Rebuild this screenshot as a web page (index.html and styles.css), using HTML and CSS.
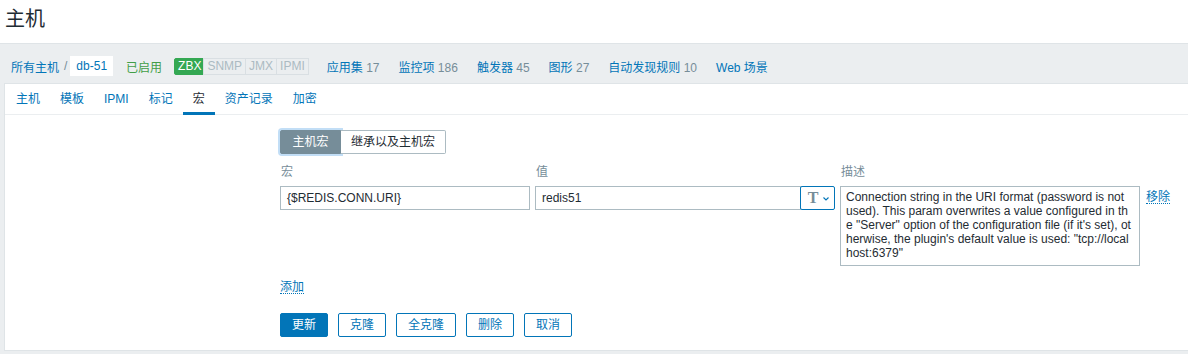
FILE: index.html
```html
<!DOCTYPE html>
<html lang="zh">
<head>
<meta charset="utf-8">
<title>主机</title>
<link rel="stylesheet" href="styles.css">
</head>
<body>
<header class="header">
  <h1 class="title">主机</h1>
</header>
<nav class="nav">
  <ul class="crumbs">
    <li><a class="link">所有主机</a></li>
    <li class="sep">/</li>
    <li class="current">db-51</li>
    <li class="enabled">已启用</li>
    <li class="status">
      <span class="st st-green">ZBX</span><span class="st st-grey">SNMP</span><span class="st st-grey">JMX</span><span class="st st-grey">IPMI</span>
    </li>
    <li class="nav-item first"><a class="link">应用集</a> <span class="cnt">17</span></li>
    <li class="nav-item"><a class="link">监控项</a> <span class="cnt">186</span></li>
    <li class="nav-item"><a class="link">触发器</a> <span class="cnt">45</span></li>
    <li class="nav-item"><a class="link">图形</a> <span class="cnt">27</span></li>
    <li class="nav-item"><a class="link">自动发现规则</a> <span class="cnt">10</span></li>
    <li class="nav-item"><a class="link">Web 场景</a></li>
  </ul>
</nav>
<main class="box">
  <ul class="tabs">
    <li class="tab">主机</li>
    <li class="tab">模板</li>
    <li class="tab">IPMI</li>
    <li class="tab">标记</li>
    <li class="tab active">宏</li>
    <li class="tab">资产记录</li>
    <li class="tab">加密</li>
  </ul>
  <div class="tab-body">
    <div class="seg-group">
      <span class="seg seg-on">主机宏</span><span class="seg">继承以及主机宏</span>
    </div>
    <div class="heads">
      <span>宏</span><span>值</span><span>描述</span>
    </div>
    <div class="macro-row">
      <div class="input macro">{$REDIS.CONN.URI}</div>
      <div class="value">
        <div class="input value-input">redis51</div>
        <div class="type-btn"><span class="t-glyph">T</span><svg class="chev" width="6" height="4" viewBox="0 0 6 4"><path d="M0.5 0.5 L3 3 L5.5 0.5" fill="none" stroke="#0275b8" stroke-width="1.1"/></svg></div>
      </div>
      <div class="desc">Connection string in the URI format (password is not<br>used). This param overwrites a value configured in th<br>e "Server" option of the configuration file (if it's set), ot<br>herwise, the plugin's default value is used: "tcp://local<br>host:6379"</div>
      <a class="dotted remove">移除</a>
    </div>
    <div class="add-row"><a class="dotted">添加</a></div>
    <div class="buttons">
      <button class="btn btn-primary">更新</button>
      <button class="btn">克隆</button>
      <button class="btn">全克隆</button>
      <button class="btn">删除</button>
      <button class="btn">取消</button>
    </div>
  </div>
</main>
</body>
</html>
```

FILE: styles.css
```css
* { box-sizing: border-box; }
html, body { margin: 0; padding: 0; }
body {
  width: 1188px;
  height: 354px;
  overflow: hidden;
  background: #ebeef0;
  color: #1f2c33;
  font-family: "Liberation Sans", Arial, "Noto Sans CJK SC", sans-serif;
  font-size: 12px;
}
ul { list-style: none; margin: 0; padding: 0; }
a { cursor: pointer; }
.link { color: #0275b8; text-decoration: none; }

.header {
  background: #fff;
  height: 43px;
  padding: 7px 0 0 5px;
}
.title {
  margin: 0;
  font-size: 20px;
  line-height: 24px;
  font-weight: normal;
  color: #1f2c33;
}

.nav {
  height: 40px;
  border-top: 1px solid #dfe4e7;
  padding: 12px 0 0 11px;
}
.crumbs {
  display: flex;
  align-items: center;
  height: 20px;
  white-space: nowrap;
}
.sep { color: #768d99; margin-left: 5px; }
.current {
  margin-left: 3px;
  background: #fff;
  color: #0275b8;
  height: 20px;
  line-height: 20px;
  padding: 0 6px;
}
.enabled { color: #429e47; margin-left: 13px; }
.status { display: flex; margin-left: 12px; }
.st {
  height: 17px;
  line-height: 15px;
  padding: 0 3px;
  border: 1px solid #d9dfe3;
  background: #ebeef0;
  color: #acbbc2;
  margin-left: -1px;
}
.st-green {
  margin-left: 0;
  background: #34a853;
  border-color: #34a853;
  color: #fff;
  border-radius: 2px 0 0 2px;
  padding: 0 2px 0 3px;
}
.nav-item { margin-left: 19px; }
.nav-item.first { margin-left: 18px; }
.cnt { color: #768d99; }

.box {
  margin: 0 -20px 0 4px;
  background: #fff;
  border: 1px solid #dfe4e7;
  padding-bottom: 13px;
}
.tabs {
  display: flex;
  height: 31px;
  border-bottom: 1px solid #ebeef0;
  padding-left: 1px;
}
.tab {
  position: relative;
  padding: 0 10px;
  line-height: 30px;
  height: 30px;
  color: #0275b8;
}
.tab.active { color: #1f2c33; }
.tab.active::after {
  content: "";
  position: absolute;
  left: 0;
  right: 0;
  bottom: -1px;
  height: 3px;
  background: #0275b8;
}

.tab-body {
  padding: 15px 0 0 275px;
  display: flex;
  flex-direction: column;
  align-items: flex-start;
}
.seg-group { display: flex; }
.seg {
  height: 24px;
  line-height: 22px;
  border: 1px solid #acbbc2;
  border-left: none;
  padding: 0 10px;
  color: #1f2c33;
  background: #fff;
  border-radius: 0 2px 2px 0;
}
.seg-on {
  border: 1px solid #768d99;
  background: #768d99;
  color: #fff;
  padding: 0 11.5px;
  border-radius: 2px 0 0 2px;
  box-shadow: 0 0 0 2px rgba(80, 160, 230, 0.35);
}

.heads {
  display: grid;
  grid-template-columns: 250px 300px 300px;
  column-gap: 5px;
  padding-top: 10px;
  line-height: 16px;
  margin-bottom: 6px;
  color: #768d99;
}
.heads span { padding-left: 1px; }

.macro-row {
  display: grid;
  grid-template-columns: 250px 300px 300px auto;
  column-gap: 5px;
  align-items: start;
}
.input {
  height: 24px;
  line-height: 22px;
  border: 1px solid #acbbc2;
  padding: 0 6px;
  color: #1f2c33;
  white-space: nowrap;
}
.value { display: flex; }
.value-input { width: 266px; }
.type-btn {
  width: 35px;
  height: 24px;
  margin-left: -1px;
  border: 1px solid #0275b8;
  border-radius: 2px;
  background: #fff;
  display: flex;
  align-items: center;
  justify-content: center;
  gap: 5px;
}
.t-glyph {
  font-family: "Liberation Serif", "Times New Roman", serif;
  font-weight: bold;
  font-size: 16px;
  line-height: 16px;
  color: #768d99;
  margin-left: 2px;
}
.chev { display: block; margin-top: 1px; }
.desc {
  height: 80px;
  border: 1px solid #acbbc2;
  padding: 3px 5px;
  line-height: 14px;
  white-space: nowrap;
  overflow: hidden;
  color: #1f2c33;
}
.dotted {
  color: #0275b8;
  border-bottom: 1px dotted #0275b8;
  line-height: 12px;
  display: inline-block;
}
.remove { margin-top: 5px; margin-left: 1px; justify-self: start; }
.add-row { margin-top: 15px; line-height: 12px; }

.buttons {
  display: flex;
  gap: 10px;
  margin-top: 19px;
}
.btn {
  height: 24px;
  padding: 0 11px;
  border: 1px solid #0275b8;
  border-radius: 2px;
  background: #fff;
  color: #0275b8;
  font: inherit;
  line-height: 22px;
  cursor: pointer;
}
.btn-primary { background: #0275b8; color: #fff; }
```
